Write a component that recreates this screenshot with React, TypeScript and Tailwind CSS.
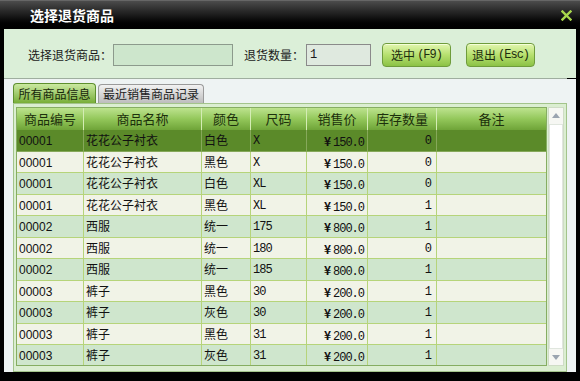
import React from "react";

const cjk = "font-['Noto_Sans_CJK_SC',sans-serif]";
const sans = "font-['Liberation_Sans','Noto_Sans_CJK_SC',sans-serif]";
const mono = "font-['Liberation_Mono','Noto_Sans_CJK_SC',monospace]";

const rows = [
  ["00001", "花花公子衬衣", "白色", "X", "150.0", "0"],
  ["00001", "花花公子衬衣", "黑色", "X", "150.0", "0"],
  ["00001", "花花公子衬衣", "白色", "XL", "150.0", "0"],
  ["00001", "花花公子衬衣", "黑色", "XL", "150.0", "1"],
  ["00002", "西服", "统一", "175", "800.0", "1"],
  ["00002", "西服", "统一", "180", "800.0", "0"],
  ["00002", "西服", "统一", "185", "800.0", "1"],
  ["00003", "裤子", "黑色", "30", "200.0", "1"],
  ["00003", "裤子", "灰色", "30", "200.0", "1"],
  ["00003", "裤子", "黑色", "31", "200.0", "1"],
  ["00003", "裤子", "灰色", "31", "200.0", "1"],
];

const headers = [
  { t: "商品编号", w: "w-[67px]" },
  { t: "商品名称", w: "w-[118px]" },
  { t: "颜色", w: "w-[49px]" },
  { t: "尺码", w: "w-[56px]" },
  { t: "销售价", w: "w-[61px]" },
  { t: "库存数量", w: "w-[69px]" },
  { t: "备注", w: "flex-1" },
];

const GreenButton = ({ label, keyName }: { label: string; keyName: string }) => (
  <button className="w-[69px] h-[24px] rounded-[4px] border border-[#6f9c3c] bg-linear-to-b from-[#e2f6ae] via-[#b6e06e] to-[#8cc246] flex items-center justify-center gap-[2px] text-[12px] text-[#1d2d0e] shadow-[inset_0_1px_0_#f4ffd8]">
    <span className={cjk}>{label}</span>
    <span className={`${mono} text-[12px] tracking-[-1px]`}>({keyName})</span>
  </button>
);

export default function App() {
  return (
    <div className="w-[580px] h-[381px] bg-black flex flex-col overflow-hidden">
      {/* title bar */}
      <div className="h-[29px] shrink-0 flex items-center justify-between pl-[30px] pr-[8px] bg-linear-to-b from-[#4c4c4c] via-[#1c1c1c] to-black border-t border-[#666]">
        <span className={`${cjk} text-[14px] font-bold text-white`}>选择退货商品</span>
        <svg width="11" height="11" viewBox="0 0 11 11">
          <path d="M1.5 1.5 L9.5 9.5 M9.5 1.5 L1.5 9.5" stroke="#a9d94c" strokeWidth="2.4" strokeLinecap="square" />
        </svg>
      </div>

      {/* body */}
      <div className="flex-1 mx-[4px] mb-[9px] flex flex-col">
        {/* form row */}
        <div className="h-[49px] shrink-0 bg-[#dbefd8] flex items-center pl-[24px] pt-[3px] text-[12px] text-[#1a1a1a]">
          <span className={cjk}>选择退货商品：</span>
          <div className="ml-[1px] w-[120px] h-[22px] bg-[#cde6cc] border border-[#8c9a8c]" />
          <span className={`${cjk} ml-[11px]`}>退货数量：</span>
          <div className="ml-[2px] w-[65px] h-[22px] bg-[#dfe9df] border border-[#8a8a8a] flex items-center pl-[3px]">
            <span className={`${mono} text-[12px]`}>1</span>
          </div>
          <div className="ml-[11px] flex gap-[15px]">
            <GreenButton label="选中" keyName="F9" />
            <GreenButton label="退出" keyName="Esc" />
          </div>
        </div>
        <div className="h-px shrink-0 bg-[#9fae9f] mr-[9px]" />

        {/* lower area */}
        <div className="flex-1 bg-[#eef3f3] pt-[4px] pl-[9px] pr-[9px] flex flex-col">
          {/* tabs */}
          <div className="flex items-end gap-[2px] h-[20px] shrink-0">
            <div className={`${cjk} h-[20px] w-[83px] rounded-t-[4px] border border-b-0 border-[#5e8f2e] bg-linear-to-b from-[#cbe9a0] to-[#78ae36] text-[12px] text-[#17270a] flex items-center justify-center`}>
              所有商品信息
            </div>
            <div className={`${cjk} h-[19px] w-[106px] rounded-t-[4px] border border-b-0 border-[#9a9a9a] bg-linear-to-b from-[#f2f2f2] to-[#bdbdbd] text-[12px] text-[#222] flex items-center justify-center`}>
              最近销售商品记录
            </div>
          </div>

          {/* panel */}
          <div className="flex-1 border border-[#a3c48b] bg-[#dbeed1] pt-[3px] pl-[2px] pr-[2px] pb-[2px] flex gap-[1px] overflow-hidden">
            {/* grid */}
            <div className="w-[531px] h-[259px] border border-[#86ad62] flex flex-col overflow-hidden">
              <div className="h-[22px] shrink-0 flex bg-linear-to-b from-[#bde38e] via-[#93c75a] to-[#6fa438]">
                {headers.map((h, i) => (
                  <div
                    key={h.t}
                    className={`${h.w} ${cjk} h-full flex items-center justify-center text-[13px] text-[#1c300c] ${i < headers.length - 1 ? "border-r border-[#d4ecb4]" : ""}`}
                  >
                    {h.t}
                  </div>
                ))}
              </div>
              {rows.map((r, i) => {
                const sel = i === 0;
                const bg = sel ? "bg-[#5b8a29]" : i % 2 === 0 ? "bg-[#cfe6cd]" : "bg-[#f1f3e7]";
                const line = sel ? "border-[#86a85a]" : "border-[#b6d47a]";
                return (
                  <div key={i} className={`h-[21.5px] shrink-0 flex border-b ${line} ${bg} text-[12px] text-[#111]`}>
                    <div className={`w-[67px] ${sans} pl-[2px] pt-[2px] border-r ${line}`}>{r[0]}</div>
                    <div className={`w-[118px] ${cjk} pl-[2px] pt-[1px] border-r ${line}`}>{r[1]}</div>
                    <div className={`w-[49px] ${cjk} pl-[2px] pt-[1px] border-r ${line}`}>{r[2]}</div>
                    <div className={`w-[56px] ${mono} tracking-[-1px] pl-[2px] pt-[2px] border-r ${line}`}>{r[3]}</div>
                    <div className={`w-[61px] ${mono} tracking-[-1px] pr-[3px] pt-[2px] text-right border-r ${line}`}>
                      <span className={`${cjk} font-bold mr-[3px]`}>¥</span>
                      {r[4]}
                    </div>
                    <div className={`w-[69px] ${mono} pr-[4px] pt-[2px] text-right border-r ${line}`}>{r[5]}</div>
                    <div className="flex-1" />
                  </div>
                );
              })}
            </div>

            {/* scrollbar */}
            <div className="w-[16px] h-[259px] bg-[#f6f7f3] border border-[#cfdcc6] flex flex-col items-center justify-between py-[5px]">
              <svg width="8" height="5" viewBox="0 0 8 5">
                <path d="M4 0 L8 5 L0 5 Z" fill="#9aa4b0" />
              </svg>
              <div className="w-[14px] flex-1 my-[6px] border border-[#e0e6de] bg-white" />
              <svg width="8" height="5" viewBox="0 0 8 5">
                <path d="M0 0 L8 0 L4 5 Z" fill="#9aa4b0" />
              </svg>
            </div>
          </div>
        </div>
      </div>
    </div>
  );
}
